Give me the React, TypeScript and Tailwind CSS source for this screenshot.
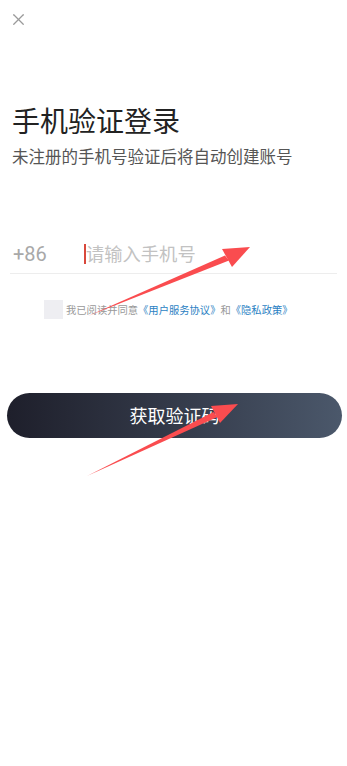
import { X } from 'lucide-react';

const cjk = { fontFamily: '"Noto Sans CJK SC", "Noto Sans", sans-serif' };

const Arrow = ({ tail, tip, left, right }: { tail: [number, number]; tip: [number, number]; left: [number, number]; right: [number, number] }) => {
  const bx = (left[0] + right[0]) / 2;
  const by = (left[1] + right[1]) / 2;
  return (
    <g fill="#fa4c4f">
      <polygon points={`${tail[0]},${tail[1]} ${bx - 2},${by - 2.5} ${bx + 2},${by + 2.5}`} />
      <polygon points={`${tip[0]},${tip[1]} ${left[0]},${left[1]} ${right[0]},${right[1]}`} />
    </g>
  );
};

export default function App() {
  return (
    <div className="relative w-[347px] h-[766px] bg-white overflow-hidden" style={cjk}>
      <div className="pt-[10px] pl-[9px] h-[30px]">
        <X size={19} strokeWidth={1.6} className="text-[#9a9a9a]" />
      </div>

      <div className="px-3 mt-[71px]">
        <h1 className="text-[28px] leading-[38px] text-[#222]">手机验证登录</h1>
        <p className="mt-[5px] text-[16.5px] leading-[24px] text-[#555]">未注册的手机号验证后将自动创建账号</p>
      </div>

      <div className="mx-[10px] mt-[66px] flex items-center h-[40px] border-b border-[#ededed]">
        <span className="w-[74px] pl-[3px] text-[20px] text-[#a8a8a8]" style={{ fontFamily: '"Roboto", sans-serif' }}>+86</span>
        <span className="w-[2px] h-[20px] bg-[#d9483b]" />
        <span className="text-[18.3px] text-[#c2c2c2]">请输入手机号</span>
      </div>

      <div className="mt-[26px] pl-[44px] flex items-center">
        <span className="w-[19px] h-[19px] bg-[#eeeef2]" />
        <span className="ml-[3px] text-[10.3px] text-[#999]">
          我已阅读并同意<span className="text-[#2b7fc3]">《用户服务协议》</span>和<span className="text-[#2b7fc3]">《隐私政策》</span>
        </span>
      </div>

      <div className="ml-[7px] mr-[5px] mt-[74px]">
        <button className="w-full h-[45px] rounded-full bg-gradient-to-r from-[#1e1f2b] to-[#4b586b] text-white text-[18px]">
          获取验证码
        </button>
      </div>

      <svg className="absolute inset-0 pointer-events-none" width={347} height={766}>
        <Arrow tail={[88, 316]} tip={[250, 247]} left={[222, 249]} right={[232, 267]} />
        <Arrow tail={[87, 476]} tip={[238, 404]} left={[211, 406]} right={[220, 423]} />
      </svg>
    </div>
  );
}
